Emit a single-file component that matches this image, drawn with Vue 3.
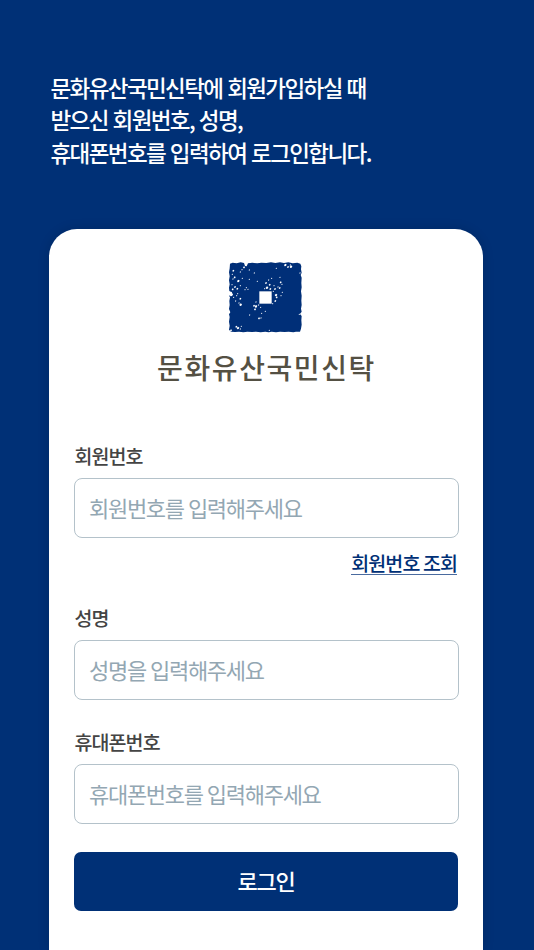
<template>
  <div class="page">
    <p class="guide">
      문화유산국민신탁에 회원가입하실 때<br />
      받으신 회원번호, 성명,<br />
      휴대폰번호를 입력하여 로그인합니다.
    </p>
    <main class="card">
      <div class="logo">
        <svg class="logo__mark" width="90" height="85" viewBox="0 0 270 255">
          <path
            fill="#002f78"
            d="M30 26L38 23 50 25 62 22 72 24 75 33 80 34 84 25 97 23 112 25 124 23 139 24 153 22 166 24 180 22 192 24 205 22 218 25 232 23 241 26 244 34 243 43 245 53 242 60 245 68 244 84 245 97 243 109 245 122 244 137 245 150 243 161 245 170 240 177 245 183 244 196 245 209 243 221 240 230 228 230 220 232 206 230 194 231 180 230 168 232 155 230 146 232 136 230 122 232 108 230 96 231 82 230 70 232 57 230 45 231 33 230 27 224 29 212 27 200 29 186 27 178 31 172 27 162 29 150 28 138 30 127 27 122 38 119 35 112 28 108 27 98 29 88 27 76 29 64 27 52 29 40z"
          />
          <g fill="#fff">
            <rect x="118" y="109" width="37" height="37" />
            <path
              v-for="(s, i) in specks"
              :key="i"
              :d="`M${s[0] - s[2]} ${s[1]}l${s[2]} ${-s[2]} ${s[2]} ${s[2] * 0.6} ${-s[2] * 0.5} ${s[2] * 1.2} ${-s[2]} ${s[2] * 0.2}z`"
            />
          </g>
        </svg>
        <span class="logo__name">문화유산국민신탁</span>
      </div>
      <form @submit.prevent>
        <div v-for="field in fields" :key="field.id" class="field">
          <label :for="field.id">{{ field.label }}</label>
          <input
            :id="field.id"
            v-model="form[field.id]"
            type="text"
            :placeholder="field.placeholder"
          />
          <a v-if="field.link" href="#" class="field__link">{{ field.link }}</a>
        </div>
        <button type="submit" class="btn">로그인</button>
      </form>
    </main>
  </div>
</template>

<script setup>
import { reactive } from 'vue';

const form = reactive({ memberNo: '', name: '', phone: '' });

const fields = [
  {
    id: 'memberNo',
    label: '회원번호',
    placeholder: '회원번호를 입력해주세요',
    link: '회원번호 조회',
  },
  { id: 'name', label: '성명', placeholder: '성명을 입력해주세요' },
  { id: 'phone', label: '휴대폰번호', placeholder: '휴대폰번호를 입력해주세요' },
];

// worn spots of the stamp: x, y, size
const specks = [
  [72, 37, 3], [66, 44, 2], [40, 47, 3], [61, 51, 2], [37, 58, 2],
  [88, 45, 2], [103, 54, 2], [44, 67, 3], [55, 78, 4], [39, 72, 2],
  [67, 70, 2], [88, 73, 2], [112, 79, 2], [36, 89, 2], [45, 96, 3],
  [52, 101, 3], [38, 103, 3], [61, 92, 2], [79, 98, 2], [33, 113, 3],
  [34, 119, 5], [41, 127, 2], [50, 122, 2], [47, 138, 2], [61, 131, 3],
  [62, 149, 4], [57, 144, 2], [75, 104, 2], [84, 103, 2], [53, 116, 2],
  [196, 30, 4], [204, 36, 3], [213, 35, 4], [211, 30, 2], [169, 40, 2],
  [180, 67, 2], [182, 82, 3], [146, 75, 2], [155, 70, 2], [138, 84, 3],
  [149, 89, 3], [141, 98, 4], [134, 101, 2], [151, 102, 3], [162, 92, 2],
  [165, 102, 3], [174, 96, 2], [179, 99, 3], [187, 112, 2], [168, 120, 4],
  [170, 127, 3], [166, 138, 3], [183, 122, 2], [160, 109, 2], [186, 88, 2],
  [158, 146, 2], [108, 141, 2], [102, 152, 3], [108, 154, 4], [105, 163, 3],
  [122, 157, 2], [116, 150, 2], [89, 180, 2], [125, 175, 2], [117, 190, 3],
  [123, 189, 2], [136, 169, 2], [49, 215, 3], [54, 219, 4], [64, 214, 2],
  [61, 222, 2], [148, 226, 2], [33, 226, 3], [240, 54, 2], [238, 178, 2],
];
</script>

<style>
body {
  margin: 0;
}
</style>
<style scoped>
.page {
  box-sizing: border-box;
  height: 950px;
  overflow: hidden;
  padding: 71px 51px 0 49px;
  background-color: #003076;
  font-family: 'Noto Sans CJK KR', 'Noto Sans', sans-serif;
  display: flex;
  flex-direction: column;
}
.guide {
  margin: 0 0 60.5px 1.5px;
  color: #fff;
  font-size: 22.5px;
  font-weight: 500;
  line-height: 32.4px;
  letter-spacing: -1.6px;
  word-spacing: 1.3px;
  white-space: nowrap;
}
.card {
  box-sizing: border-box;
  flex: 1;
  padding: 26px 24px 0 25px;
  background-color: #fff;
  border-radius: 28px 28px 0 0;
  box-shadow: 0 0 12px rgba(0, 0, 0, 0.14);
}
.logo {
  display: flex;
  flex-direction: column;
  align-items: center;
}
.logo__mark {
  display: block;
  margin-right: 3px;
}
.logo__name {
  margin-top: 5px;
  color: #545043;
  font-size: 28px;
  font-weight: 500;
  line-height: 44px;
  letter-spacing: 1.6px;
}
form {
  display: flex;
  flex-direction: column;
  margin-top: 53px;
}
.field {
  display: flex;
  flex-direction: column;
  margin-bottom: 28px;
}
.field label {
  color: #444;
  font-size: 19.5px;
  font-weight: 500;
  line-height: 28px;
  letter-spacing: -0.9px;
  margin: 0 0 8px 0.5px;
}
.field input {
  box-sizing: border-box;
  width: 100%;
  height: 60px;
  padding: 0 14px 2px;
  border: 1.5px solid #b4c2ca;
  border-radius: 8px;
  outline: none;
  background: #fff;
  color: #444;
  font-family: inherit;
  font-size: 22px;
  letter-spacing: -1.3px;
  word-spacing: 0.6px;
}
.field input::placeholder {
  color: #93a7b3;
  opacity: 1;
}
.field__link {
  align-self: flex-end;
  margin: 13px 2px 0 0;
  border-bottom: 1px solid #4a6b9f;
  color: #003076;
  font-size: 19.5px;
  font-weight: 500;
  line-height: 23px;
  letter-spacing: -0.9px;
  text-decoration: none;
}
.field:first-child {
  margin-bottom: 29px;
}
.btn {
  height: 59px;
  margin-right: 1px;
  padding: 0 0 2px;
  border: 0;
  border-radius: 7px;
  background-color: #003076;
  color: #fff;
  font-family: inherit;
  font-size: 22px;
  font-weight: 500;
  letter-spacing: -1.2px;
  cursor: pointer;
}
</style>
